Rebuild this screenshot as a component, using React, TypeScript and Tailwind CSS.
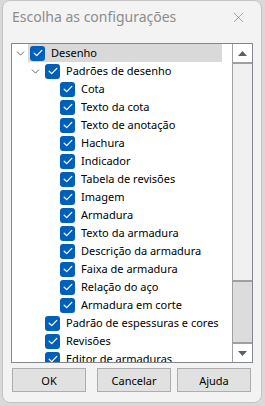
import { ChevronDown, X } from 'lucide-react';

type Item = { label: string; level: number; parent?: boolean; selected?: boolean };

const items: Item[] = [
  { label: 'Desenho', level: 0, parent: true, selected: true },
  { label: 'Padrões de desenho', level: 1, parent: true },
  { label: 'Cota', level: 2 },
  { label: 'Texto da cota', level: 2 },
  { label: 'Texto de anotação', level: 2 },
  { label: 'Hachura', level: 2 },
  { label: 'Indicador', level: 2 },
  { label: 'Tabela de revisões', level: 2 },
  { label: 'Imagem', level: 2 },
  { label: 'Armadura', level: 2 },
  { label: 'Texto da armadura', level: 2 },
  { label: 'Descrição da armadura', level: 2 },
  { label: 'Faixa de armadura', level: 2 },
  { label: 'Relação do aço', level: 2 },
  { label: 'Armadura em corte', level: 2 },
  { label: 'Padrão de espessuras e cores', level: 1 },
  { label: 'Revisões', level: 1 },
  { label: 'Editor de armaduras', level: 1 },
];

const indent = ['pl-0', 'pl-[15px]', 'pl-[30px]'];

function Check() {
  return (
    <div className="w-[15px] h-[15px] shrink-0 rounded-[3px] bg-[#005fb8] flex items-center justify-center">
      <svg width="10" height="8" viewBox="0 0 10 8" fill="none">
        <path d="M1.2 4.2 L3.7 6.6 L8.8 1.4" stroke="white" strokeWidth="1.3" strokeLinecap="round" strokeLinejoin="round" />
      </svg>
    </div>
  );
}

function Arrow({ down }: { down?: boolean }) {
  return (
    <svg width="9" height="5" viewBox="0 0 9 5">
      <path d={down ? 'M0 0 H9 L4.5 5 Z' : 'M0 5 H9 L4.5 0 Z'} fill="#606060" />
    </svg>
  );
}

export default function App() {
  return (
    <div className="w-[265px] h-[406px] bg-[#d9d9d9] font-['Noto_Sans',sans-serif] text-black overflow-hidden">
      <div className="ml-[2px] w-[260px] h-[403px] rounded-[8px] bg-[#f3f3f3] border border-[#c4c4c4] flex flex-col">
        {/* Title bar */}
        <div className="h-[42px] flex items-start justify-between pl-[9px] pr-[14px] pt-[4px]">
          <span className="text-[14px] text-[#8c8c8c] leading-[24px]">Escolha as configurações</span>
          <X className="w-[17px] h-[17px] mt-[4px] text-[#8c8c8c]" strokeWidth={1.1} />
        </div>

        {/* Tree */}
        <div className="ml-[8px] w-[242px] h-[320px] border border-[#828790] bg-white flex">
          <div className="flex-1 overflow-hidden">
            {items.map((it) => (
              <div key={it.label} className={`h-[18px] flex items-center ${indent[it.level]}`}>
                <div className="w-[16px] h-[18px] shrink-0 flex items-center justify-center">
                  {it.parent && <ChevronDown className="w-[13px] h-[13px] text-[#333]" strokeWidth={1.4} />}
                </div>
                <div
                  className={`h-[18px] flex-1 mr-[10px] flex items-center gap-[6px] pl-[2px] ${it.selected ? 'bg-[#d9d9d9]' : ''}`}
                >
                  <Check />
                  <span className="text-[11px] leading-[18px] whitespace-nowrap">{it.label}</span>
                </div>
              </div>
            ))}
          </div>
          {/* Scrollbar */}
          <div className="w-[20px] shrink-0 border-l border-[#a0a0a0] bg-[#f0f0f0] flex flex-col">
            <div className="h-[20px] bg-white border-b-2 border-[#a0a0a0] flex items-center justify-center">
              <Arrow />
            </div>
            <div className="flex-1" />
            <div className="h-[62px] bg-[#dcdcdc] border-t-2 border-[#a0a0a0]" />
            <div className="h-[20px] bg-white border-t-2 border-[#a0a0a0] flex items-center justify-center">
              <Arrow down />
            </div>
          </div>
        </div>

        {/* Buttons */}
        <div className="mt-[5px] ml-[9px] flex gap-[11px]">
          {['OK', 'Cancelar', 'Ajuda'].map((b, i) => (
            <button
              key={b}
              className={`w-[74px] h-[24px] bg-[#e1e1e1] border border-[#adadad] text-[11px] leading-none ${i === 2 ? '-ml-[5px]' : ''}`}
            >
              {b}
            </button>
          ))}
        </div>
      </div>
    </div>
  );
}
